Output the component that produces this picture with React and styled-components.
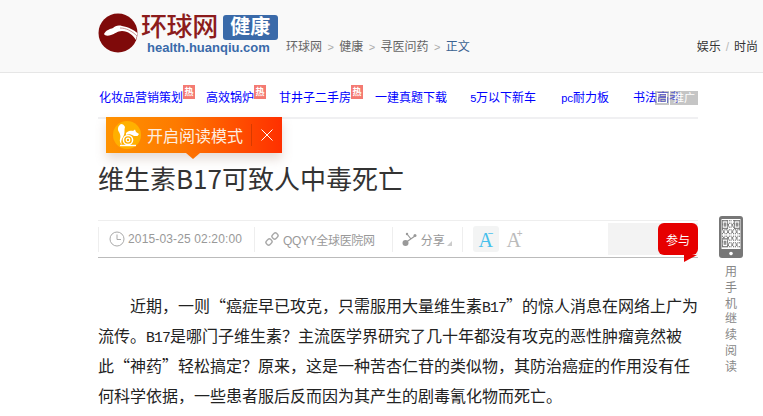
import React from "react"
import styled, { createGlobalStyle } from "styled-components"

const CJK = `"Noto Sans CJK SC", sans-serif`
const MIXED = `"Liberation Sans", "Noto Sans CJK SC", sans-serif`

const Global = createGlobalStyle`
  html, body {
    margin: 0;
    padding: 0;
    background: #fff;
    overflow: hidden;
  }
  body {
    font-family: ${MIXED};
    color: #333;
  }
  * { box-sizing: border-box; }
`

const Page = styled.div`
  position: relative;
  width: 763px;
  height: 416px;
  overflow: hidden;
`

const Header = styled.header`
  height: 73px;
  background: #f9f9f9;
  border-bottom: 1px solid #e6e6e6;
  display: flex;
  padding: 13px 5px 0 98px;
`

const LogoMark = styled.svg`
  width: 40px;
  height: 40px;
  flex: none;
`

const LogoWords = styled.div`
  margin-left: 3px;
  width: 138px;
  flex: none;
`

const LogoTop = styled.div`
  display: flex;
  align-items: center;
  height: 28px;
`

const LogoName = styled.span`
  font-size: 26px;
  line-height: 28px;
  color: #8c1c1c;
  font-weight: 500;
  letter-spacing: -0.4px;
`

const Channel = styled.span`
  margin-left: 5px;
  width: 55px;
  height: 25px;
  border-radius: 3px;
  background: #3a6aa9;
  color: #fff;
  font-size: 20px;
  font-weight: 700;
  line-height: 25px;
  text-align: center;
`

const LogoUrl = styled.div`
  margin-left: 6px;
  font-size: 13px;
  line-height: 13px;
  font-weight: 700;
  color: #3a6aa9;
  white-space: nowrap;
`

const Crumbs = styled.nav`
  margin: 25px 0 0 7px;
  font-size: 12px;
  line-height: 18px;
  color: #666;
  display: flex;
  gap: 5.4px;
`

const CrumbSep = styled.span`
  color: #aaa;
  font-size: 11px;
`

const CrumbNow = styled.span`
  color: #3a6291;
`

const HeaderRight = styled.div`
  margin: 25px 0 0 auto;
  font-size: 12px;
  line-height: 18px;
  color: #333;
  display: flex;
  gap: 5px;
`

const Slash = styled.span`
  color: #bbb;
`

const Column = styled.main`
  width: 600px;
  margin-left: 98px;
`

const AdRow = styled.div`
  position: relative;
  height: 46px;
  border-bottom: 2px solid #f0f0f2;
  display: flex;
  padding: 15px 0 0 1px;
  overflow: hidden;
`

const AdLink = styled.a`
  font-family: ${CJK};
  font-size: 12px;
  line-height: 18px;
  color: #0000ff;
  white-space: nowrap;
  margin-right: ${p => p.$gap}px;
  position: relative;
`

const Latin = styled.span`
  font-family: "Liberation Mono", monospace;
  font-size: 0.92em;
  letter-spacing: -0.057em;
  line-height: 0;
`

const Hot = styled.i`
  position: absolute;
  top: -3px;
  right: -12px;
  width: 12px;
  height: 14px;
  background: #f47a72;
  color: #fff;
  font-size: 9px;
  line-height: 13px;
  font-style: normal;
  font-weight: 700;
  text-align: center;
`

const AdTag = styled.span`
  position: absolute;
  right: 0;
  top: 18px;
  display: flex;
  gap: 1px;
  height: 14px;
  color: #fff;
  font-size: 11px;
  line-height: 14px;
`

const AdTagIcon = styled.span`
  width: 14px;
  background: rgba(150, 150, 150, 0.55);
  display: flex;
  align-items: center;
  justify-content: center;
  &::after {
    content: "";
    width: 8px;
    height: 8px;
    border: 1px solid #fff;
  }
`

const AdTagText = styled.span`
  width: 28px;
  background: rgba(150, 150, 150, 0.55);
  text-align: center;
`

const ReadBanner = styled.div`
  position: absolute;
  left: 106px;
  top: 117px;
  width: 176px;
  height: 36px;
  background: linear-gradient(90deg, #ff9200 0%, #fd7a00 40%, #ff5400 70%, #ff3000 100%);
  box-shadow: 0 6px 10px rgba(150, 110, 90, 0.25);
  display: flex;
  align-items: center;
  padding-left: 7px;
  color: #fdeee0;
  font-family: ${CJK};
  font-size: 16px;
  &::after {
    content: "";
    position: absolute;
    left: 80px;
    bottom: -6px;
    border-style: solid;
    border-width: 6px 7px 0 7px;
    border-color: #fd7000 transparent transparent transparent;
  }
`

const SquirrelBadge = styled.svg`
  width: 28px;
  height: 28px;
  flex: none;
  margin-right: 6px;
`

const BannerClose = styled.svg`
  width: 12px;
  height: 12px;
  margin-left: 9px;
  flex: none;
`

const BannerRule = styled.span`
  width: 1px;
  height: 22px;
  margin-left: 8px;
  background: #d83a00;
  flex: none;
`

const Title = styled.h1`
  margin: 40px 0 0;
  height: 38px;
  font-family: ${CJK};
  font-size: 26px;
  line-height: 38px;
  font-weight: 400;
  color: #333;
  white-space: nowrap;
`

const Toolbar = styled.div`
  margin-top: 23px;
  height: 38px;
  border-top: 1px solid #eeeeee;
  border-bottom: 1px solid #bbb;
  display: flex;
  align-items: center;
  color: #999;
  font-size: 12px;
`

const ToolCell = styled.div`
  height: 25px;
  display: flex;
  align-items: center;
  gap: ${p => p.$gap}px;
  padding: 0 ${p => p.$right}px 0 ${p => p.$left}px;
  border-left: 1px solid #eee;
  white-space: nowrap;
`

const DateText = styled.span`
  letter-spacing: 0.14px;
`

const SourceText = styled.span`
  letter-spacing: -0.35px;
`

const ToolIcon = styled.svg`
  width: 16px;
  height: 16px;
  flex: none;
`

const ShareCorner = styled.span`
  width: 0;
  height: 0;
  margin: 8px 0 0 -1px;
  border-style: solid;
  border-width: 0 0 5px 5px;
  border-color: transparent transparent #ccc transparent;
`

const FontButton = styled.span`
  width: 26px;
  height: 26px;
  border-radius: 3px;
  background: ${p => (p.$active ? "#f3f4f4" : "transparent")};
  color: ${p => (p.$active ? "#45c0ec" : "#bbb")};
  font-family: "Liberation Serif", serif;
  font-size: 20px;
  line-height: 28px;
  text-align: center;
  position: relative;
  & > sup {
    position: absolute;
    right: ${p => (p.$active ? 5 : 4)}px;
    top: 2px;
    font-size: 10px;
    line-height: 12px;
    font-family: "Liberation Sans", sans-serif;
  }
`

const JoinArea = styled.div`
  margin-left: auto;
  width: 90px;
  height: 32px;
  background: #f3f3f3;
  display: flex;
  justify-content: flex-end;
`

const JoinButton = styled.button`
  width: 40px;
  height: 32px;
  border: 0;
  padding: 0;
  border-radius: 6px;
  background: #e60000;
  color: #fff;
  font-family: ${CJK};
  font-size: 12px;
  position: relative;
  &::after {
    content: "";
    position: absolute;
    left: 26px;
    bottom: -7px;
    width: 0;
    border-style: solid;
    border-width: 7px 13px 0 0;
    border-color: #e60000 transparent transparent transparent;
  }
`

const Article = styled.p`
  margin: 32px 0 0;
  font-family: ${CJK};
  font-size: 16px;
  line-height: 30px;
  text-indent: 32px;
  color: #222;
  white-space: nowrap;
`

const PhoneAside = styled.aside`
  position: absolute;
  left: 719px;
  top: 216px;
  width: 24px;
  display: flex;
  flex-direction: column;
  align-items: center;
`

const PhoneIcon = styled.svg`
  width: 24px;
  height: 42px;
`

const PhoneText = styled.div`
  margin-top: 5px;
  font-family: ${CJK};
  font-size: 12px;
  line-height: 15.8px;
  color: #888;
  width: 12px;
  text-align: center;
`

// a QR code squeezed into the phone's screen, stretched like in the picture
const QR_SIZE = 21
const isFinder = (x, y) => {
  const inBox = (ox, oy) => {
    const dx = x - ox
    const dy = y - oy
    if (dx < 0 || dy < 0 || dx > 6 || dy > 6) return null
    const ring = dx === 0 || dy === 0 || dx === 6 || dy === 6
    const core = dx >= 2 && dx <= 4 && dy >= 2 && dy <= 4
    return ring || core
  }
  const a = inBox(0, 0)
  const b = inBox(QR_SIZE - 7, 0)
  const c = inBox(0, QR_SIZE - 7)
  return a !== null ? a : b !== null ? b : c
}

const qrOn = (x, y) => {
  const f = isFinder(x, y)
  if (f !== null) return f
  return (x * 7 + y * 13 + x * y * 3) % 5 < 2
}

const QrCells = () => {
  const cells = []
  for (let y = 0; y < QR_SIZE; y++) {
    for (let x = 0; x < QR_SIZE; x++) {
      if (qrOn(x, y)) {
        cells.push(<rect key={x + "-" + y} x={3 + x * 0.86} y={4 + y * 1.3} width="0.86" height="1.3" fill="#666" />)
      }
    }
  }
  return cells
}

const ads = [
  { text: "化妆品营销策划", hot: true, gap: 23 },
  { text: "高效锅炉", hot: true, gap: 25 },
  { text: "甘井子二手房", hot: true, gap: 24 },
  { text: "一建真题下载", gap: 23 },
  { latin: "5", text: "万以下新车", gap: 25 },
  { latin: "pc", text: "耐力板", gap: 24 },
  { text: "书法高考", gap: 0 },
]

export default function App() {
  return (
    <Page>
      <Global />
      <Header>
        <LogoMark viewBox="0 0 40 40">
          <circle cx="20" cy="20" r="19.5" fill="#7f0a0a" />
          <path d="M6 21C8 17 12 16 15 15C17 13 20 12 24 13C30 14 36 17 39.5 20L38 27C35 22 30 18 24 18C19 18 17 21 13 22C10 23 7 23 6 21Z" fill="#fff" />
          <path d="M22 15C28 15 34 18 39 23" fill="none" stroke="#b56a6a" strokeWidth="0.7" />
        </LogoMark>
        <LogoWords>
          <LogoTop>
            <LogoName>环球网</LogoName>
            <Channel>健康</Channel>
          </LogoTop>
          <LogoUrl>health.huanqiu.com</LogoUrl>
        </LogoWords>
        <Crumbs>
          <span>环球网</span>
          <CrumbSep>&gt;</CrumbSep>
          <span>健康</span>
          <CrumbSep>&gt;</CrumbSep>
          <span>寻医问药</span>
          <CrumbSep>&gt;</CrumbSep>
          <CrumbNow>正文</CrumbNow>
        </Crumbs>
        <HeaderRight>
          <span>娱乐</span>
          <Slash>/</Slash>
          <span>时尚</span>
        </HeaderRight>
      </Header>

      <Column>
        <AdRow>
          {ads.map(ad => (
            <AdLink key={ad.text} $gap={ad.gap}>
              {ad.latin && <Latin>{ad.latin}</Latin>}
              {ad.text}
              {ad.hot && <Hot>热</Hot>}
            </AdLink>
          ))}
          <AdTag>
            <AdTagIcon />
            <AdTagText>推广</AdTagText>
          </AdTag>
        </AdRow>

        <Title>维生素B17可致人中毒死亡</Title>

        <Toolbar>
          <ToolCell $left={10} $right={12} $gap={3}>
            <ToolIcon viewBox="0 0 16 16">
              <circle cx="8" cy="8" r="7" fill="none" stroke="#aaa" strokeWidth="1" />
              <path d="M8 3.5V8.5H12" fill="none" stroke="#aaa" strokeWidth="1" />
            </ToolIcon>
            <DateText>2015-03-25 02:20:00</DateText>
          </ToolCell>
          <ToolCell $left={9} $right={17} $gap={3}>
            <ToolIcon viewBox="0 0 16 16">
              <g fill="none" stroke="#aaa" strokeWidth="1.4">
                <rect x="8.5" y="2" width="5" height="6" rx="2" transform="rotate(45 11 5)" />
                <rect x="2.5" y="8" width="5" height="6" rx="2" transform="rotate(45 5 11)" />
              </g>
            </ToolIcon>
            <SourceText>QQYY全球医院网</SourceText>
          </ToolCell>
          <ToolCell $left={9} $right={10} $gap={3}>
            <ToolIcon viewBox="0 0 16 16">
              <path d="M3 12L13 5M5 3l4 5" fill="none" stroke="#999" strokeWidth="1.2" />
              <circle cx="3.5" cy="12" r="3" fill="#999" />
              <circle cx="13" cy="4.5" r="1.5" fill="#999" />
              <circle cx="5" cy="3" r="1.2" fill="#999" />
            </ToolIcon>
            分享
            <ShareCorner />
          </ToolCell>
          <ToolCell $left={10} $right={0} $gap={2}>
            <FontButton $active>
              A<sup>−</sup>
            </FontButton>
            <FontButton>
              A<sup>+</sup>
            </FontButton>
          </ToolCell>
          <JoinArea>
            <JoinButton>参与</JoinButton>
          </JoinArea>
        </Toolbar>

        <Article>
          近期，一则“癌症早已攻克，只需服用大量维生素<Latin>B17</Latin>”的惊人消息在网络上广为
          <br />
          流传。<Latin>B17</Latin>是哪门子维生素？主流医学界研究了几十年都没有攻克的恶性肿瘤竟然被
          <br />
          此“神药”轻松搞定？原来，这是一种苦杏仁苷的类似物，其防治癌症的作用没有任
          <br />
          何科学依据，一些患者服后反而因为其产生的剧毒氰化物而死亡。
        </Article>
      </Column>

      <ReadBanner>
        <SquirrelBadge viewBox="0 0 28 28">
          <circle cx="14" cy="14" r="14" fill="#ffb000" />
          <path d="M8 3C5 5 4 8 6 11C7 13 8 15 7 18C6.5 20 7 22 9 24C7 19 10 17 11 14C12 11 11 9 12 6C11 4 10 3 8 3Z" fill="#fff" />
          <path d="M13 12C15 9.5 19 9.5 20 10L22 8.5L23 11L26 13L24.5 15L21 15C18 13 15 13 13 14Z" fill="#fff" />
          <circle cx="15" cy="19" r="4.6" fill="none" stroke="#fff" strokeWidth="1.5" />
          <circle cx="15" cy="19" r="1.8" fill="none" stroke="#fff" strokeWidth="1.2" />
          <path d="M7 24.5H23" stroke="#fff" strokeWidth="1.4" />
        </SquirrelBadge>
        开启阅读模式
        <BannerRule />
        <BannerClose viewBox="0 0 12 12">
          <path d="M0.5 0.5L11.5 11.5M11.5 0.5L0.5 11.5" stroke="#fff" strokeWidth="1" />
        </BannerClose>
      </ReadBanner>

      <PhoneAside>
        <PhoneIcon viewBox="0 0 24 42">
          <rect x="0" y="0" width="24" height="42" rx="3" fill="#777" />
          <rect x="2.5" y="3" width="19" height="30" fill="#fff" />
          <QrCells />
          <circle cx="12" cy="37.5" r="1.8" fill="#fff" />
        </PhoneIcon>
        <PhoneText>用手机继续阅读</PhoneText>
      </PhoneAside>
    </Page>
  )
}
